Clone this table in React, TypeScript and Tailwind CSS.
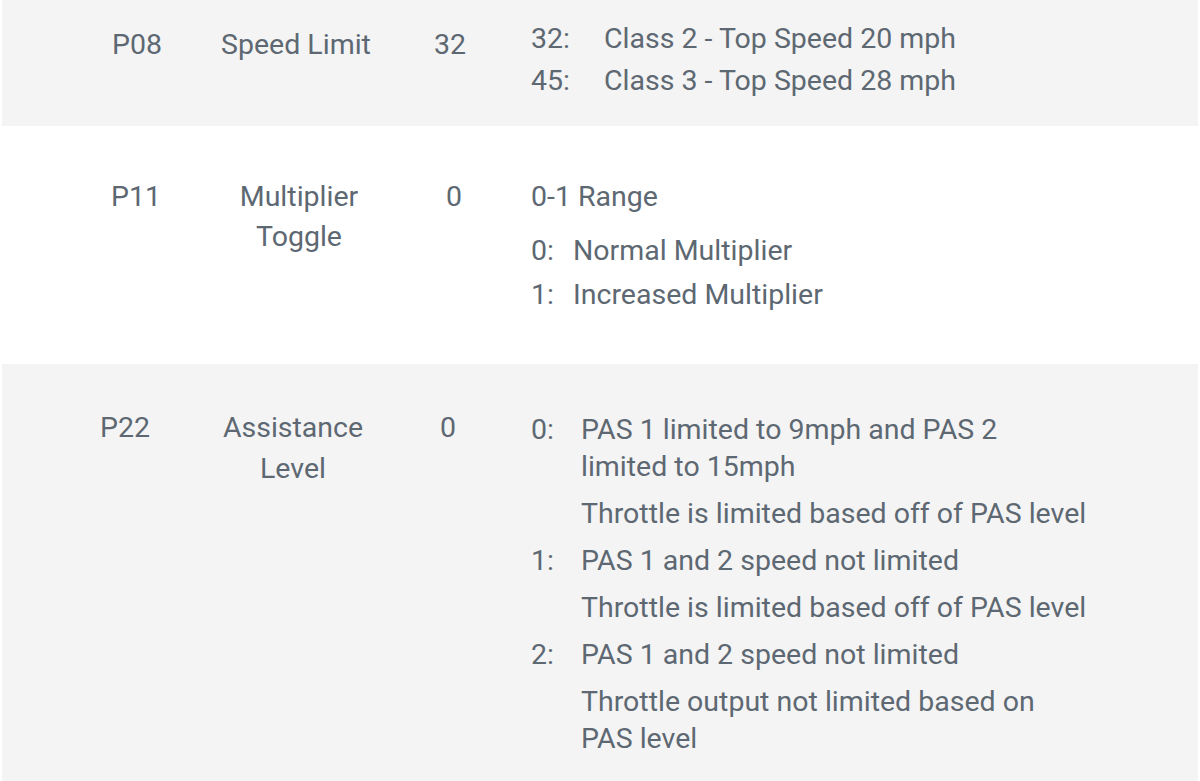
import React from "react";

function Item({ label, children, labelClass }: { label: string; children: React.ReactNode; labelClass: string }) {
  return (
    <div className="flex">
      <span className={labelClass}>{label}</span>
      <span className="whitespace-nowrap">{children}</span>
    </div>
  );
}

export default function App() {
  return (
    <div className="w-[1200px] h-[781px] overflow-hidden bg-white px-[2px] text-[28.5px] text-[#5d6872]" style={{ fontFamily: "Roboto, 'Noto Sans', sans-serif" }}>
      {/* P08 */}
      <div className="flex h-[126px] bg-[#f4f4f4] pt-[18px] leading-[42px]">
        <div className="ml-[76px] w-[118px] pt-[6px] text-center">P08</div>
        <div className="w-[200px] pt-[6px] text-center">Speed Limit</div>
        <div className="w-[108px] pt-[6px] text-center">32</div>
        <div className="pl-[27px]">
          <Item label="32:" labelClass="w-[73px]">Class 2 - Top Speed 20 mph</Item>
          <Item label="45:" labelClass="w-[73px]">Class 3 - Top Speed 28 mph</Item>
        </div>
      </div>

      {/* P11 */}
      <div className="flex h-[238px] bg-white pt-[51px] leading-[40px]">
        <div className="ml-[75px] w-[118px] text-center">P11</div>
        <div className="w-[208px] text-center">
          Multiplier
          <br />
          Toggle
        </div>
        <div className="w-[102px] text-center">0</div>
        <div className="pl-[26px]">
          <div className="mb-[14px]">0-1 Range</div>
          <div className="flex flex-col gap-[4px]">
            <Item label="0:" labelClass="w-[42px]">Normal Multiplier</Item>
            <Item label="1:" labelClass="w-[42px]">Increased Multiplier</Item>
          </div>
        </div>
      </div>

      {/* P22 */}
      <div className="flex h-[417px] bg-[#f4f4f4] pt-[43px]">
        <div className="ml-[64px] w-[118px] text-center leading-[41px]">P22</div>
        <div className="w-[218px] text-center leading-[41px]">
          Assistance
          <br />
          Level
        </div>
        <div className="w-[92px] text-center leading-[41px]">0</div>
        <div className="flex flex-col gap-[10px] pl-[37px] pt-[4px] leading-[37px]">
          <Item label="0:" labelClass="w-[50px]">
            PAS 1 limited to 9mph and PAS 2
            <br />
            limited to 15mph
          </Item>
          <Item label="" labelClass="w-[50px]">Throttle is limited based off of PAS level</Item>
          <Item label="1:" labelClass="w-[50px]">PAS 1 and 2 speed not limited</Item>
          <Item label="" labelClass="w-[50px]">Throttle is limited based off of PAS level</Item>
          <Item label="2:" labelClass="w-[50px]">PAS 1 and 2 speed not limited</Item>
          <Item label="" labelClass="w-[50px]">
            Throttle output not limited based on
            <br />
            PAS level
          </Item>
        </div>
      </div>
    </div>
  );
}
